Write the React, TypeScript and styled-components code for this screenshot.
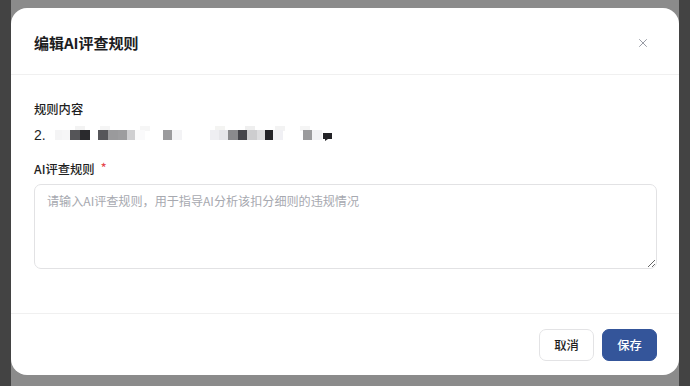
import React from "react";
import styled, { createGlobalStyle } from "styled-components";
import { X } from "lucide-react";

const Global = createGlobalStyle`
  html, body { margin: 0; padding: 0; }
  body {
    width: 690px; height: 386px; overflow: hidden;
    font-family: "Noto Sans CJK SC", "Liberation Sans", sans-serif;
    -webkit-font-smoothing: antialiased;
  }
`;

const Backdrop = styled.div`
  display: grid;
  grid-template-columns: 11px 1fr 11px;
  height: 386px;
  background: #8b8b8b;
`;

const Strip = styled.div`
  background: #434343;
`;

const Stage = styled.div`
  padding-top: 8px;
`;

const Modal = styled.div`
  background: #fff;
  border-radius: 16px;
  overflow: hidden;
  display: flex;
  flex-direction: column;
`;

const Header = styled.div`
  display: flex;
  align-items: center;
  justify-content: space-between;
  padding: 24px 29px 20px 23px;
  border-bottom: 1px solid #f0f0f0;
`;

const Title = styled.h2`
  margin: 0;
  font-size: 15px;
  line-height: 22px;
  font-weight: 600;
  color: #1d1d1f;
`;

const Close = styled.button`
  border: 0;
  background: none;
  padding: 0;
  display: flex;
  color: #8a8e98;
  cursor: pointer;
`;

const Body = styled.div`
  padding: 24px 22px 44px 23px;
  display: flex;
  flex-direction: column;
`;

const Label = styled.div<{ $gap: number }>`
  font-size: 12.3px;
  line-height: 20px;
  font-weight: 500;
  color: #1f1f1f;
  margin-bottom: ${(p) => p.$gap}px;
`;

const Required = styled.span`
  color: #e5484d;
  margin-left: 6px;
  font-size: 12px;
  position: relative;
  top: -2px;
`;

const ContentLine = styled.div`
  display: flex;
  align-items: center;
  height: 20px;
  font-size: 14px;
  color: #1f1f1f;
  margin-bottom: 14px;
`;

const Num = styled.span`
  width: 21px;
  font-family: "Liberation Sans", Arial, sans-serif;
`;

const TextArea = styled.textarea`
  box-sizing: border-box;
  width: 100%;
  height: 85px;
  border: 1px solid #e2e2e4;
  border-radius: 7px;
  padding: 6px 12px;
  font-family: inherit;
  font-size: 12.1px;
  line-height: 20px;
  color: #1f1f1f;
  outline: none;
  resize: vertical;
  &::placeholder { color: #a7a9b0; }
`;

const Footer = styled.div`
  border-top: 1px solid #f0f0f0;
  padding: 15px 22px 14px;
  display: flex;
  justify-content: flex-end;
  gap: 8px;
`;

const Button = styled.button<{ $primary?: boolean }>`
  box-sizing: border-box;
  width: 55px;
  height: 32px;
  border-radius: 7px;
  font-family: inherit;
  font-size: 12.3px;
  font-weight: 500;
  border: 1px solid ${(p) => (p.$primary ? "#34559a" : "#e3e3e5")};
  background: ${(p) => (p.$primary ? "#34559a" : "#fff")};
  color: ${(p) => (p.$primary ? "#fff" : "#1f1f1f")};
  cursor: pointer;
`;

const cells: [number, string][] = [
  [55, "#f4f4f5"], [62, "#f6f6f7"], [70, "#555558"], [80, "#2a2a2d"],
  [98, "#56565a"], [108, "#9a9a9c"], [118, "#9d9d9f"], [127, "#cfcfd1"],
  [135, "#fafafb"], [163, "#9b9b9d"], [172, "#f3f3f5"], [210, "#eeeef2"],
  [219, "#e6e6ea"], [228, "#8a8a8d"], [238, "#45454a"], [247, "#cdcdcf"],
  [257, "#dddddf"], [265, "#232327"], [273, "#f0f0f4"], [303, "#9b9b9d"],
  [312, "#f2f2f4"],
];
const topCells: [number, string][] = [
  [75, "#f3f3f3"], [100, "#f5f5f5"], [140, "#f6f6f6"], [215, "#f4f4f2"],
  [245, "#efefef"], [275, "#f3f3f3"], [300, "#f5f5f5"],
];

const Mosaic = () => (
  <svg width="290" height="20" viewBox="0 0 290 20">
    {topCells.map(([x, c]) => (
      <rect key={"t" + x} x={x - 55} y={1} width={10} height={5} fill={c} />
    ))}
    {cells.map(([x, c]) => (
      <rect key={x} x={x - 55} y={5} width={10} height={10} fill={c} />
    ))}
    <path d="M268 8h9v6h-4l-3 2v-2h-2z" fill="#222226" />
  </svg>
);

export default function App() {
  return (
    <>
      <Global />
      <Backdrop>
        <Strip />
        <Stage>
          <Modal>
            <Header>
              <Title>编辑AI评查规则</Title>
              <Close aria-label="关闭">
                <X size={14} strokeWidth={1.5} />
              </Close>
            </Header>
            <Body>
              <Label $gap={6}>规则内容</Label>
              <ContentLine>
                <Num>2.</Num>
                <Mosaic />
              </ContentLine>
              <Label $gap={5}>
                AI评查规则<Required>*</Required>
              </Label>
              <TextArea placeholder="请输入AI评查规则，用于指导AI分析该扣分细则的违规情况" />
            </Body>
            <Footer>
              <Button>取消</Button>
              <Button $primary>保存</Button>
            </Footer>
          </Modal>
        </Stage>
        <Strip />
      </Backdrop>
    </>
  );
}
